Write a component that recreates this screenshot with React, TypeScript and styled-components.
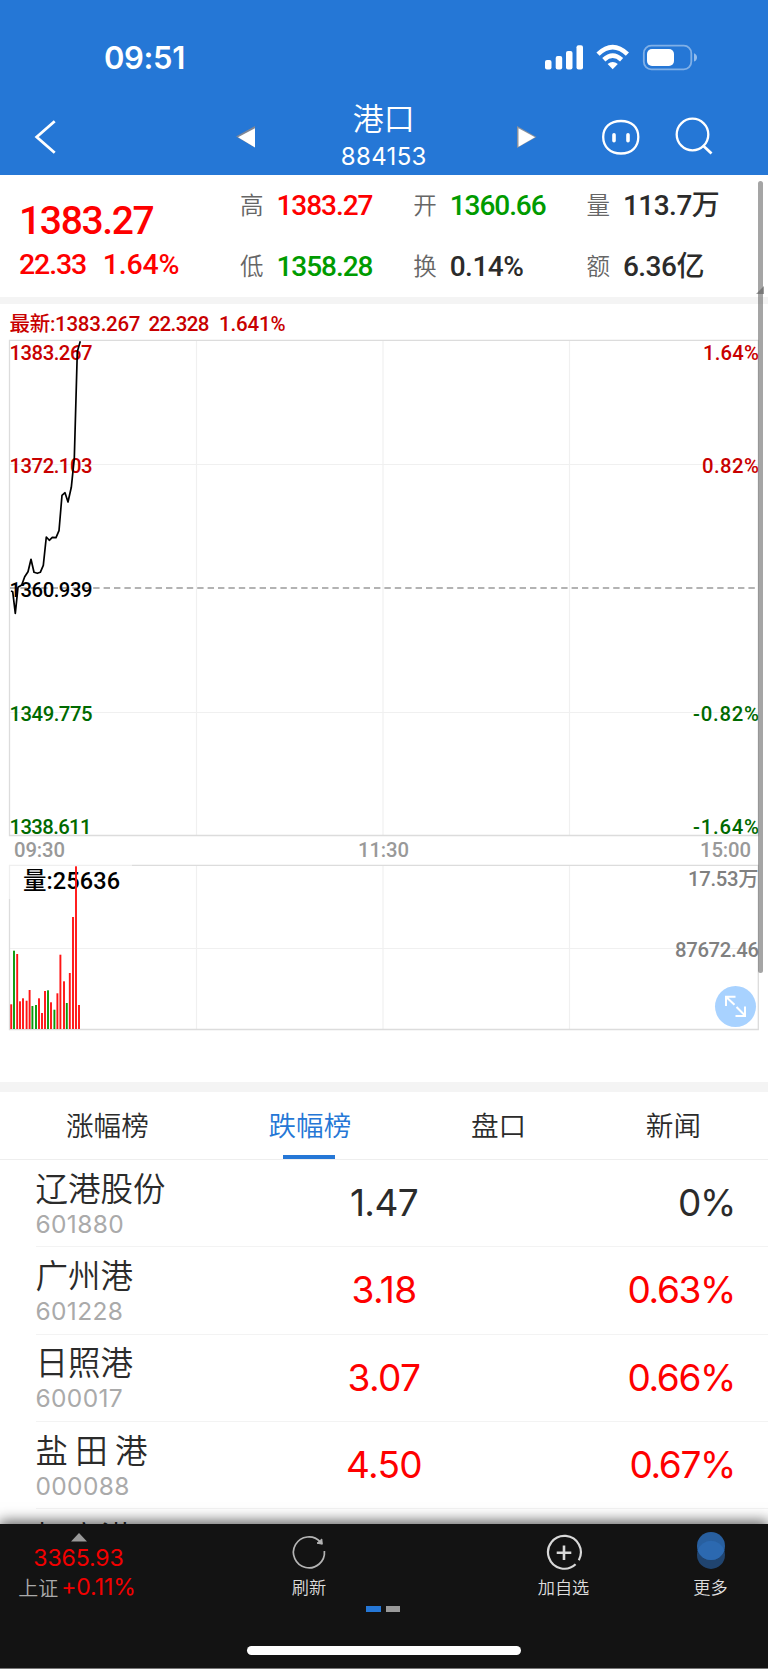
import React from "react";
import styled, { createGlobalStyle } from "styled-components";

const BLUE = "#2577d6";
const RED = "#fe0000";
const GREEN = "#009b00";
const INK = "#2b2b2b";
const DIN = `Roboto, "Noto Sans CJK SC", sans-serif`;
const SANS = `Inter, "Noto Sans CJK SC", sans-serif`;
const HAN = `"Noto Sans CJK SC", sans-serif`;

const GlobalStyle = createGlobalStyle`
  * { box-sizing: border-box; }
  body { margin: 0; background: #fff; font-family: ${SANS}; color: ${INK}; }
`;

const Page = styled.div`
  position: relative;
  display: flex;
  flex-direction: column;
  width: 768px;
  height: 1669px;
  overflow: hidden;
  background: #fff;
  white-space: nowrap;
`;

/* ---------- header ---------- */
const Header = styled.header`
  height: 175px;
  flex: none;
  background: ${BLUE};
  color: #fff;
`;
const StatusBar = styled.div`
  display: flex;
  justify-content: space-between;
  align-items: center;
  height: 98px;
  padding: 16px 70px 0 104px;
`;
const Clock = styled.span`
  font: 600 31px/40px ${SANS};
  letter-spacing: -0.35px;
  padding-top: 1px;
`;
const NavBar = styled.div`
  display: flex;
  align-items: center;
  height: 77px;
  padding: 0 55px 0 34px;
`;
const NavTitle = styled.div`
  width: 96px;
  margin: 0 88.5px 0 82.5px;
  padding-bottom: 3px;
  text-align: center;
`;
const NavName = styled.div`
  font: 350 31px/38px ${HAN};
`;
const NavCode = styled.div`
  font: 400 24px/32px ${SANS};
  letter-spacing: 0.35px;
  margin-top: 5px;
`;
const Icon = styled.svg<{ $ml?: number }>`
  flex: none;
  display: block;
  margin-left: ${(p) => p.$ml ?? 0}px;
  overflow: visible;
`;

/* ---------- quote summary ---------- */
const Summary = styled.section`
  display: flex;
  flex: none;
  height: 122px;
`;
const LastPrice = styled.div`
  width: 240px;
  padding: 23px 0 0 19px;
  color: ${RED};
`;
const Price = styled.div`
  font: 500 39px/46px ${DIN};
  letter-spacing: -1.35px;
`;
const Change = styled.div`
  display: flex;
  gap: 16.5px;
  font: 500 28.5px/42px ${DIN};
  letter-spacing: -1.1px;
`;
const ChangeRate = styled.span`
  letter-spacing: -0.2px;
`;
const Stats = styled.div`
  display: grid;
  grid-template-columns: repeat(3, 173.2px);
  grid-template-rows: 61px 61px;
`;
const Stat = styled.div`
  display: flex;
  align-items: center;
  height: 61px;
`;
const StatLabel = styled.span`
  width: 36.5px;
  padding-bottom: 3px;
  font: 350 23.5px/34px ${HAN};
  color: #666;
`;
const StatValue = styled.span<{ $color: string; $tight: boolean }>`
  padding-top: 1px;
  font: 500 28px/34px ${DIN};
  letter-spacing: ${(p) => (p.$tight ? -1.05 : -0.5)}px;
  color: ${(p) => p.$color};
`;
const Band = styled.div<{ $h: number }>`
  flex: none;
  height: ${(p) => p.$h}px;
  background: #f4f4f4;
`;

/* ---------- chart ---------- */
const ChartArea = styled.section`
  position: relative;
  flex: none;
  height: 778px;
`;
const ChartSvg = styled.svg`
  display: block;
  font-family: ${DIN};
  font-weight: 500;
`;
const ExpandButton = styled.button`
  position: absolute;
  right: 12px;
  bottom: 55px;
  width: 41px;
  height: 41px;
  padding: 0;
  border: 0;
  border-radius: 50%;
  background: #a8d2ff;
`;
const ScrollThumb = styled.div`
  position: absolute;
  left: 757.5px;
  top: 181px;
  width: 5.5px;
  height: 792px;
  border-radius: 3px;
  background: rgba(105, 105, 105, 0.6);
`;
const Corner = styled.div`
  position: absolute;
  left: 756px;
  top: 286px;
  width: 8px;
  height: 8px;
  background: rgba(90, 90, 90, 0.6);
  clip-path: polygon(100% 0, 100% 100%, 0 100%);
`;

/* ---------- tabs and list ---------- */
const Tabs = styled.nav`
  display: flex;
  flex: none;
  gap: 119.7px;
  height: 68px;
  padding-left: 66px;
  border-bottom: 1px solid #eee;
`;
const Tab = styled.div<{ $active?: boolean }>`
  position: relative;
  font: 350 27.6px/65px ${HAN};
  color: ${(p) => (p.$active ? BLUE : INK)};
  &::after {
    content: "";
    display: ${(p) => (p.$active ? "block" : "none")};
    position: absolute;
    left: 50%;
    bottom: 0;
    width: 52px;
    height: 4px;
    margin-left: -27px;
    background: ${BLUE};
  }
`;
const List = styled.div`
  flex: none;
  height: 364px;
  overflow: hidden;
`;
const Row = styled.div`
  display: grid;
  grid-template-columns: 208.5px 280px 1fr;
  align-items: center;
  height: 87.3px;
  margin-left: 35.5px;
  padding-right: 33px;
  border-bottom: 1px solid #f3f3f3;
`;
const RowName = styled.div`
  font: 350 32.5px/42px ${HAN};
  margin-top: -2px;
`;
const RowCode = styled.div`
  height: 30px;
  font: 400 24.5px/30px ${SANS};
  letter-spacing: 0.35px;
  color: #aaa;
  margin-top: 1px;
`;
const Figure = styled.div<{ $up: boolean; $right?: boolean }>`
  font: 400 37px/50px ${SANS};
  letter-spacing: ${(p) => (p.$right ? -1.35 : -0.6)}px;
  text-align: ${(p) => (p.$right ? "right" : "center")};
  color: ${(p) => (p.$up ? RED : INK)};
`;

/* ---------- footer ---------- */
const Footer = styled.footer`
  position: relative;
  flex: none;
  display: flex;
  flex-direction: column;
  align-items: center;
  height: 145px;
  background: #131313;
  border-bottom: 1px solid #777;
  box-shadow: 0 -2px 13px 1px rgba(0, 0, 0, 0.62);
`;
const Tools = styled.div`
  display: flex;
  width: 100%;
  height: 80px;
`;
const IndexTicker = styled.div`
  width: 157px;
  display: flex;
  flex-direction: column;
  align-items: center;
  padding-top: 9px;
  color: #f30000;
  font: 400 23px/29px ${SANS};
  letter-spacing: -0.1px;
`;
const TickerValue = styled.div`
  margin-top: 2px;
`;
const TickerName = styled.span`
  margin-right: 3px;
  font: 350 20px/29px ${HAN};
  color: #aaa;
`;
const TickerLine = styled.div`
  display: flex;
  padding-right: 3px;
`;
const Tool = styled.div<{ $w: number; $ml: number }>`
  width: ${(p) => p.$w}px;
  margin-left: ${(p) => p.$ml}px;
  display: flex;
  flex-direction: column;
  align-items: center;
  padding-top: 7px;
  color: #ddd;
  font: 350 17.2px/24px ${HAN};
`;
const ToolIcon = styled.svg`
  display: block;
  margin-bottom: 2px;
`;
const Pager = styled.div`
  display: flex;
  gap: 5px;
  margin: 2px 0 0 -2px;
`;
const PageDot = styled.i<{ $on?: boolean }>`
  width: 14.5px;
  height: 6px;
  background: ${(p) => (p.$on ? BLUE : "#999")};
`;
const HomeIndicator = styled.div`
  width: 274px;
  height: 9.5px;
  margin-top: 33.5px;
  border-radius: 5px;
  background: #fff;
`;

const stats = [
  ["高", "1383.27", RED],
  ["开", "1360.66", GREEN],
  ["量", "113.7万", INK],
  ["低", "1358.28", GREEN],
  ["换", "0.14%", INK],
  ["额", "6.36亿", INK],
];

const rows = [
  { name: "辽港股份", code: "601880", price: "1.47", pct: "0%", up: false },
  { name: "广州港", code: "601228", price: "3.18", pct: "0.63%", up: true },
  { name: "日照港", code: "600017", price: "3.07", pct: "0.66%", up: true },
  { name: "盐 田 港", code: "000088", price: "4.50", pct: "0.67%", up: true },
  { name: "招商港口", code: "", price: "", pct: "", up: true },
];

const pricePoints =
  "11,591 12.7,591.7 15.3,613.3 18,587.3 21.7,585 24.7,576.7 28,571.7 31,559.3 34,572.3 37.3,573.3 40.3,572.3 43.3,565.3 46.3,537 49.3,540.3 52.3,537.3 56,537.7 59,530.7 62,495.3 65,492.7 68,502 71.3,487.3 74.3,458.3 77.3,351.7 80.3,341.3";

// x centre, top, rising
const volumes: [number, number, boolean][] = [
  [11.2, 1004.3, true], [14, 950.7, false], [17.2, 954, true], [20, 1001.3, true],
  [23, 998.3, true], [26.6, 1000.7, true], [29.6, 990, true], [32.4, 1006, false],
  [36, 1005, false], [39, 998.3, true], [42, 1013, true], [45, 991, true],
  [48, 990.3, false], [51, 1002.3, true], [54.4, 1009.7, false], [57.4, 993.3, true],
  [60.4, 954.7, true], [64, 981.3, true], [66.8, 1003, false], [69.8, 973, true],
  [73, 917, true], [76, 866.3, true], [79, 1005, true],
];

const DARK_RED = "#c80000";
const DARK_GREEN = "#006a00";

type LabelProps = { x: number; y: number; w: number; fill: string; size?: number; end?: boolean; children: string };
const Label = ({ x, y, w, fill, size = 20.3, end, children }: LabelProps) => (
  <text x={end ? x - w : x} y={y} fill={fill} fontSize={size} textLength={w}>
    {children}
  </text>
);

const Chart = () => (
  <ChartArea>
    <ChartSvg width="768" height="778" viewBox="0 304 768 778">
      <g fill={DARK_RED}>
        <text x="9.5" y="330.5" fontSize="20.5" textLength="131">最新:1383.267</text>
        <text x="148.5" y="330.5" fontSize="20.5" textLength="61">22.328</text>
        <text x="219" y="330.5" fontSize="20.5" textLength="66.5">1.641%</text>
      </g>
      <g fill="none" stroke="#f0f0f0" strokeWidth="1.2">
        <path d="M196.5 340V835M383 340V835M569.5 340V835M10 464.5H758M10 712.5H758" />
        <path d="M196.5 866V1029M383 866V1029M569.5 866V1029M10 948.5H758" />
      </g>
      <g fill="none" stroke="#dcdcdc" strokeWidth="1.3">
        <path d="M9.5 340.3H758.3V835.5H9.5Z" />
        <path d="M132 865.3H758.3V1029.5H9.5V899" />
        <path d="M132 865.3H9.5V899" stroke="#efefef" />
      </g>
      <path d="M10 588H758" stroke="#9a9a9a" strokeWidth="1.6" strokeDasharray="6.4 4" />

      <Label x={9.5} y={360.2} w={83} fill={DARK_RED}>1383.267</Label>
      <Label x={9.5} y={473.2} w={83} fill={DARK_RED}>1372.103</Label>
      <Label x={9.5} y={597.2} w={83} fill="#000">1360.939</Label>
      <Label x={9.5} y={721.2} w={83} fill={DARK_GREEN}>1349.775</Label>
      <Label x={9.5} y={833.7} w={82} fill={DARK_GREEN}>1338.611</Label>
      <Label end x={759} y={360.2} w={56} fill={DARK_RED}>1.64%</Label>
      <Label end x={759} y={473.2} w={57} fill={DARK_RED}>0.82%</Label>
      <Label end x={759} y={721.2} w={66} fill={DARK_GREEN}>-0.82%</Label>
      <Label end x={759} y={833.7} w={66} fill={DARK_GREEN}>-1.64%</Label>
      <Label x={14} y={857.3} w={51} fill="#999">09:30</Label>
      <Label x={358} y={857.3} w={51} fill="#999">11:30</Label>
      <Label x={700} y={857.3} w={51} fill="#999">15:00</Label>
      <Label end x={758.5} y={885.7} w={70.5} fill="#808080">17.53万</Label>
      <Label end x={759} y={956.5} w={84} fill="#808080">87672.46</Label>
      <Label x={23} y={889} w={97} size={23.5} fill="#000">量:25636</Label>

      {volumes.map(([x, top, up]) => (
        <rect key={x} x={x - 0.95} y={top} width="1.9" height={1029 - top} fill={up ? "#ff1414" : "#0a9a0a"} />
      ))}
      <polyline points={pricePoints} fill="none" stroke="#000" strokeWidth="1.7" strokeLinejoin="round" />
    </ChartSvg>
    <ExpandButton aria-label="全屏">
      <Icon width="41" height="41" fill="none" stroke="#fff" strokeWidth="2">
        <path d="M20.5 10.7H11V20M11.5 11.2L19.5 18.8M21.5 21L29.5 29M30 20.5V30H20.5" />
      </Icon>
    </ExpandButton>
  </ChartArea>
);

export default function App() {
  return (
    <Page>
      <GlobalStyle />
      <Header>
        <StatusBar>
          <Clock>09:51</Clock>
          <Icon width="153" height="26" viewBox="545 43 153 26" fill="#fff">
            <rect x="545" y="59" width="6.5" height="9.5" rx="2" />
            <rect x="555.7" y="55" width="6.5" height="13.5" rx="2" />
            <rect x="566" y="50" width="6.5" height="18.5" rx="2" />
            <rect x="576.5" y="44.3" width="6.5" height="24.2" rx="2" />
            <g fill="none" stroke="#fff" strokeWidth="4.6">
              <path d="M598 53.2Q612.7 39.2 627.4 53.2" />
              <path d="M603.8 58.8Q612.7 50.6 621.6 58.8" />
            </g>
            <path d="M607.6 63Q612.7 58.8 617.8 63L612.7 68.3Z" />
            <rect x="643.8" y="44.7" width="47.5" height="23.6" rx="7.5" fill="none" stroke="#fff" strokeOpacity=".42" strokeWidth="1.8" />
            <rect x="647" y="48" width="27" height="17" rx="5" />
            <path d="M694 52.3Q697 53.5 697 56.4T694 60.5Z" opacity=".5" />
          </Icon>
        </StatusBar>
        <NavBar>
          <Icon width="22" height="36" viewBox="34 119 22 36" fill="none" stroke="#fff" strokeWidth="2.8">
            <path d="M54.7 121.3L36.7 137L54.7 152.7" />
          </Icon>
          <Icon $ml={179} width="20" height="22" viewBox="0 0 20 22">
            <path d="M1 10.5L20 0V21.5Z" fill="#7f8796" />
            <path d="M3 11.3L20 2.2V21.5Z" fill="#fff" />
          </Icon>
          <NavTitle>
            <NavName>港口</NavName>
            <NavCode>884153</NavCode>
          </NavTitle>
          <Icon $ml={-1.5} width="20" height="22" viewBox="0 0 20 22">
            <path d="M0 0L19.5 11L0 22Z" fill="#8c929c" />
            <path d="M1.5 2.3L18 11.3L1.5 20.7Z" fill="#fff" />
          </Icon>
          <Icon $ml={65} width="38" height="36" viewBox="0 0 38 36" fill="none" stroke="#fff" strokeWidth="2.3">
            <path d="M19 2C30 2 36.3 8.5 36.3 18S30 34.5 19 34.5S1.2 27.5 1.2 18S8 2 19 2Z" />
            <path d="M12 15.8V21.8M26 15.8V21.8" strokeWidth="3.6" strokeLinecap="round" />
          </Icon>
          <Icon $ml={36} width="37" height="37" viewBox="0 0 37 37" fill="none" stroke="#fff" strokeWidth="2.3">
            <circle cx="16.5" cy="16.5" r="15.8" />
            <path d="M27.5 28L35.5 35.5" strokeWidth="2.8" />
          </Icon>
        </NavBar>
      </Header>

      <Summary>
        <LastPrice>
          <Price>1383.27</Price>
          <Change>
            <span>22.33</span>
            <ChangeRate>1.64%</ChangeRate>
          </Change>
        </LastPrice>
        <Stats>
          {stats.map(([label, value, color]) => (
            <Stat key={label}>
              <StatLabel>{label}</StatLabel>
              <StatValue $color={color} $tight={value.length > 6}>{value}</StatValue>
            </Stat>
          ))}
        </Stats>
      </Summary>
      <Band $h={7} />

      <Chart />
      <Band $h={10} />

      <Tabs>
        <Tab>涨幅榜</Tab>
        <Tab $active>跌幅榜</Tab>
        <Tab>盘口</Tab>
        <Tab>新闻</Tab>
      </Tabs>
      <List>
        {rows.map((r) => (
          <Row key={r.name}>
            <div>
              <RowName>{r.name}</RowName>
              <RowCode>{r.code}</RowCode>
            </div>
            <Figure $up={r.up}>{r.price}</Figure>
            <Figure $up={r.up} $right>{r.pct}</Figure>
          </Row>
        ))}
      </List>

      <Footer>
        <Tools>
          <IndexTicker>
            <Icon width="16" height="9" fill="#999">
              <path d="M8 0L16 8.5H0Z" />
            </Icon>
            <TickerValue>3365.93</TickerValue>
            <TickerLine>
              <TickerName>上证</TickerName>
              +0.11%
            </TickerLine>
          </IndexTicker>
          <Tool $w={60} $ml={122}>
            <ToolIcon width="40" height="42" viewBox="0 0 40 42" fill="none" stroke="#b4b4b4" strokeWidth="1.7">
              <path d="M35.4 20A15.5 15.5 0 1 1 31.3 10.8" />
              <path d="M32.8 8L33.3 13.2L28 12.2Z" fill="#b4b4b4" strokeWidth="1" />
            </ToolIcon>
            刷新
          </Tool>
          <Tool $w={60} $ml={194.5}>
            <ToolIcon width="40" height="42" viewBox="0 0 40 42" fill="none" stroke="#d8d8d8" strokeWidth="2.2">
              <path d="M34.8 29.2A16.4 16.4 0 1 0 31.6 33.3" />
              <path d="M20 14.5V29M12.7 21.8H27.3" strokeWidth="2.6" />
            </ToolIcon>
            加自选
          </Tool>
          <Tool $w={60} $ml={87}>
            <ToolIcon width="40" height="42" viewBox="0 0 40 42">
              <circle cx="20" cy="23.9" r="14" fill="#20446f" />
              <circle cx="20" cy="15" r="14" fill="#285f9f" />
              <path d="M6.7 19.45A14 14 0 0 1 33.3 19.45A14 14 0 0 1 6.7 19.45Z" fill="#2c69b0" />
            </ToolIcon>
            更多
          </Tool>
        </Tools>
        <Pager>
          <PageDot $on />
          <PageDot />
        </Pager>
        <HomeIndicator />
      </Footer>
      <ScrollThumb />
      <Corner />
    </Page>
  );
}
